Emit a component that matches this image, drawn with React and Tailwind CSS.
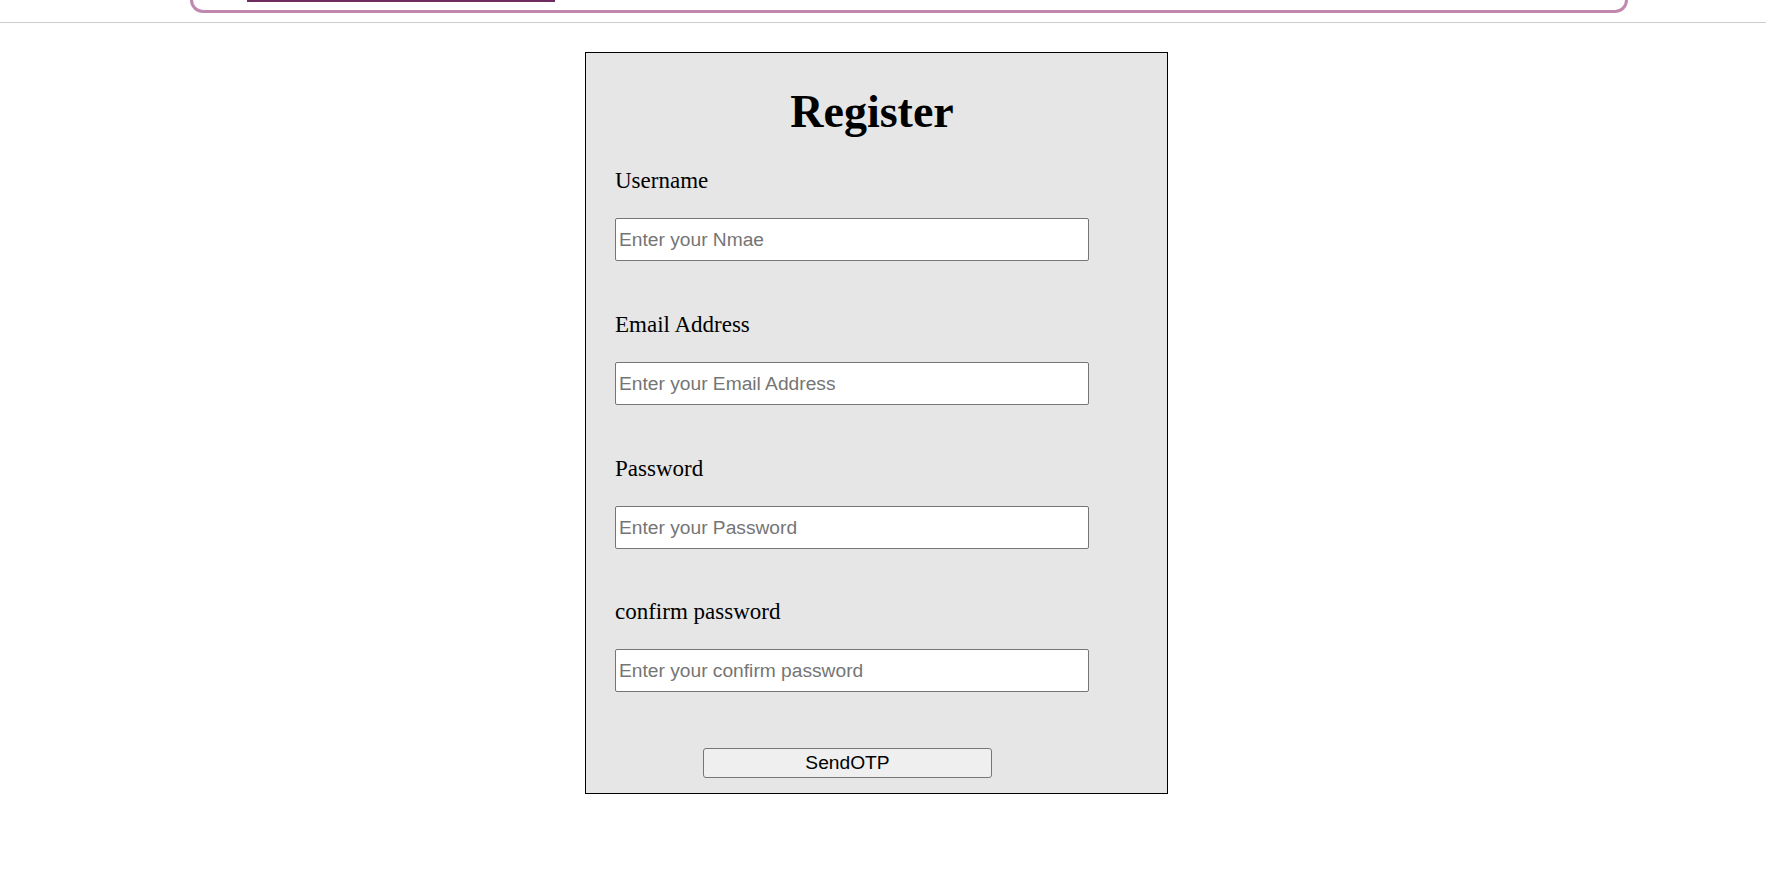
import React, { useState } from 'react';

const fields = [
  { id: 'username', label: 'Username', type: 'text', placeholder: 'Enter your Nmae', gap: 'mb-[51px]' },
  { id: 'email', label: 'Email Address', type: 'email', placeholder: 'Enter your Email Address', gap: 'mb-[51px]' },
  { id: 'password', label: 'Password', type: 'password', placeholder: 'Enter your Password', gap: 'mb-[50px]' },
  { id: 'confirm', label: 'confirm password', type: 'password', placeholder: 'Enter your confirm password', gap: 'mb-0' },
];

function Header() {
  return (
    <div className="h-[23px] border-b border-[#cccccc]">
      <div className="ml-[190px] w-[1438px] h-[13px] border-x-[3px] border-b-[3px] border-[#c088ae] rounded-b-[20px]">
        <div className="ml-[54px] w-[308px] h-[2px] bg-[#6e2d5e]"></div>
      </div>
    </div>
  );
}

export default function App() {
  const [form, setForm] = useState({ username: '', email: '', password: '', confirm: '' });

  const handleChange = (e) => {
    setForm({ ...form, [e.target.name]: e.target.value });
  };

  return (
    <div className="min-h-screen bg-white font-['Liberation_Serif',serif] text-black">
      <Header />

      {/* Register form */}
      <form
        onSubmit={(e) => e.preventDefault()}
        className="ml-[585px] mt-[29px] w-[583px] flex flex-col border border-black bg-[#e6e6e6] pl-[29px] pr-[38px] pb-[15px]"
      >
        <h1 className="mt-[32px] text-center text-[46px] leading-[53px] font-bold">Register</h1>

        <div className="mt-[30px] flex flex-col">
          {fields.map((f) => (
            <div key={f.id} className={`flex flex-col ${f.gap}`}>
              <label htmlFor={f.id} className="text-[23px] leading-[26px]">
                {f.label}
              </label>
              <input
                id={f.id}
                name={f.id}
                type={f.type}
                value={form[f.id]}
                onChange={handleChange}
                placeholder={f.placeholder}
                className="mt-[24px] w-[474px] h-[43px] bg-white border border-[#767676] rounded-[2px] px-[3px] font-['Liberation_Sans',Arial,sans-serif] text-[19.2px] text-black placeholder:text-[#757575] outline-none"
              />
            </div>
          ))}
        </div>

        <button
          type="submit"
          className="mt-[56px] ml-[88px] w-[289px] h-[30px] bg-[#efefef] border border-[#767676] rounded-[3px] font-['Liberation_Sans',Arial,sans-serif] text-[19.2px] leading-[28px] text-black"
        >
          SendOTP
        </button>
      </form>
    </div>
  );
}
